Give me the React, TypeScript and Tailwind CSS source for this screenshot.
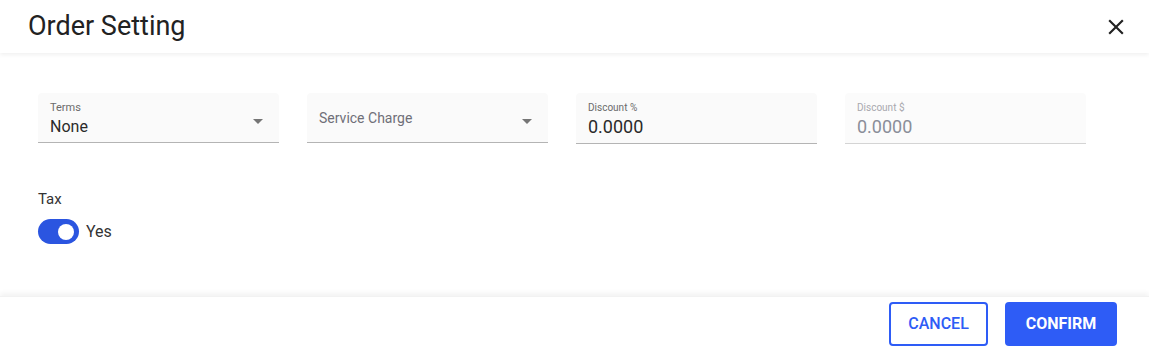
import { useState } from "react";

function ArrowDown() {
  return (
    <svg width="24" height="24" viewBox="0 0 24 24" className="text-[#757575]">
      <path d="M7 10l5 5 5-5z" fill="currentColor" />
    </svg>
  );
}

function SelectField({ label, value }: { label: string; value?: string }) {
  return (
    <div className="relative h-[50px] bg-[#fafafa] rounded-t border-b border-[#b4b4b4] px-3">
      {value ? (
        <>
          <div className="pt-[8px] text-[11px] leading-[13px] text-[#6b6b6b]">{label}</div>
          <div className="mt-[2px] text-[16px] leading-[22px] text-[#2a2a2a]">{value}</div>
        </>
      ) : (
        <div className="pt-[15px] text-[14px] leading-[20px] text-[#6f6f78]">{label}</div>
      )}
      <div className="absolute right-[9px] top-[16px]">
        <ArrowDown />
      </div>
    </div>
  );
}

function InputField({ label, value, disabled }: { label: string; value: string; disabled?: boolean }) {
  return (
    <div
      className={
        disabled
          ? "h-[51px] bg-[#fbfbfb] rounded-t border-b border-[#d4d4d4] px-3"
          : "h-[51px] bg-[#fafafa] rounded-t border-b border-[#b4b4b4] px-3"
      }
    >
      <div
        className={
          disabled
            ? "pt-[8px] text-[10px] leading-[13px] text-[#a8a8ae]"
            : "pt-[8px] text-[10px] leading-[13px] text-[#6b6b6b]"
        }
      >
        {label}
      </div>
      <div
        className={
          disabled
            ? "text-[18px] leading-[25px] text-[#8a8e99]"
            : "text-[18px] leading-[25px] text-[#2a2a2a]"
        }
      >
        {value}
      </div>
    </div>
  );
}

export default function App() {
  const [tax, setTax] = useState(true);

  return (
    <div className="w-[1149px] h-[352px] bg-white flex flex-col font-['Roboto','Liberation_Sans',sans-serif]">
      <div className="h-[53px] flex items-center justify-between pl-[28px] pr-[20px] shadow-[0_2px_4px_rgba(0,0,0,0.06)] z-10">
        <h1 className="text-[27px] text-[#222] leading-[32px] -mt-[1px]">Order Setting</h1>
        <button className="w-[26px] h-[26px] flex items-center justify-center text-[#222]">
          <svg width="26" height="26" viewBox="0 0 24 24">
            <path
              d="M19 6.41L17.59 5 12 10.59 6.41 5 5 6.41 10.59 12 5 17.59 6.41 19 12 13.41 17.59 19 19 17.59 13.41 12z"
              fill="currentColor"
            />
          </svg>
        </button>
      </div>

      <div className="flex-1 px-[38px] pt-[40px]">
        <div className="grid grid-cols-[241px_241px_241px_241px] gap-x-[28px]">
          <SelectField label="Terms" value="None" />
          <SelectField label="Service Charge" />
          <InputField label="Discount %" value="0.0000" />
          <InputField label="Discount $" value="0.0000" disabled />
        </div>

        <div className="mt-[45px] text-[15px] leading-[20px] text-[#333]">Tax</div>
        <div className="mt-[10px] flex items-center gap-[7px]">
          <button
            onClick={() => setTax(!tax)}
            className={
              tax
                ? "w-[41px] h-[25px] rounded-full bg-[#2b55e0] flex items-center justify-end pr-[5px]"
                : "w-[41px] h-[25px] rounded-full bg-[#bdbdbd] flex items-center justify-start pl-[5px]"
            }
          >
            <span className="w-[16px] h-[16px] rounded-full bg-white" />
          </button>
          <span className="text-[16px] leading-[22px] text-[#333]">Yes</span>
        </div>
      </div>

      <div className="h-[56px] flex items-start justify-end gap-[17px] pr-[32px] pt-[5px] shadow-[0_-3px_5px_rgba(0,0,0,0.05)] border-t border-[#f2f2f2]">
        <button className="w-[99px] h-[44px] rounded-[4px] border-2 border-[#2e5cf6] text-[#2e5cf6] text-[16px] font-medium">
          CANCEL
        </button>
        <button className="w-[112px] h-[44px] rounded-[4px] bg-[#2e5cf6] text-white text-[16px] font-bold">
          CONFIRM
        </button>
      </div>
    </div>
  );
}
